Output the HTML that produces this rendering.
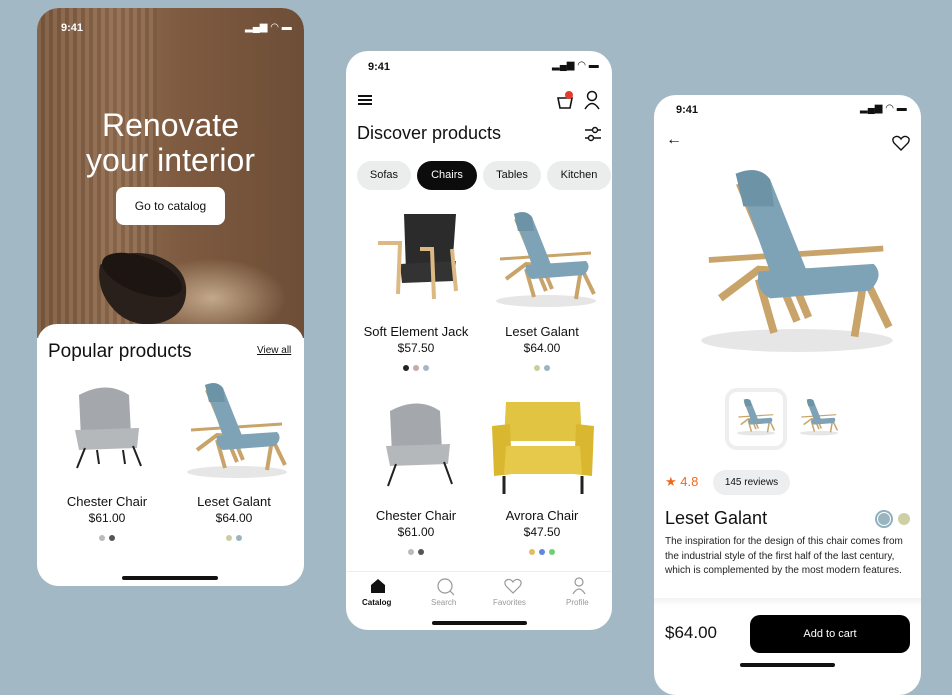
<!DOCTYPE html>
<html><head><meta charset="utf-8"><style>
*{margin:0;padding:0;box-sizing:border-box}
body{width:952px;height:674px;overflow:hidden;background:#a2b8c4;font-family:"Liberation Sans",sans-serif;position:relative;color:#111}
.ph{position:absolute;background:#fff;border-radius:22px;overflow:hidden}
.a{position:absolute}
.t{position:absolute;white-space:nowrap}
.c{text-align:center}
.dot{display:inline-block;width:6px;height:6px;border-radius:50%;margin:0 2px}
.bar{position:absolute;height:4px;background:#111;border-radius:2px}
</style></head><body>
<svg width="0" height="0" style="position:absolute">
<defs>
<g id="lounge">
 <ellipse cx="60" cy="92" rx="50" ry="6" fill="#e6e6e6"/>
 <path d="M30 10 L60 82 M36 8 L66 80" stroke="#c9a46a" stroke-width="4" fill="none"/>
 <path d="M20 70 L40 55 L95 58 L108 85 M40 60 L48 88 M95 60 L90 90" stroke="#c9a46a" stroke-width="4" fill="none"/>
 <path d="M14 50 L105 44" stroke="#c9a46a" stroke-width="3"/>
 <path d="M28 5 Q40 0 46 8 L66 58 L48 62 Z" fill="#7ea3b6"/>
 <path d="M28 5 Q40 0 46 8 L48 22 L32 22 Z" fill="#6d93a6"/>
 <path d="M40 56 L100 52 Q106 58 98 66 L46 70 Q38 66 40 56Z" fill="#7ea3b6"/>
</g>
</defs></svg>

<!-- LEFT PHONE -->
<div class="ph" style="left:37px;top:8px;width:267px;height:578px;background:#fff">
 <div class="a" style="left:0;top:0;width:267px;height:330px;background:linear-gradient(90deg,#7a573c 0%,#8f6a4c 30%,#7d5a40 55%,#6e4e37 100%)"></div>
 <div class="a" style="left:0;top:0;width:120px;height:330px;background:repeating-linear-gradient(90deg,rgba(255,255,255,.08) 0 4px,rgba(0,0,0,.06) 4px 8px)"></div>
 <div class="a" style="left:100px;top:250px;width:150px;height:80px;background:radial-gradient(ellipse at center,rgba(255,235,200,.55),rgba(255,235,200,0) 70%)"></div>
 <svg class="a" style="left:55px;top:235px" width="100" height="85"><path d="M8 22 Q30 5 62 12 Q92 22 94 44 Q96 72 68 80 Q36 86 18 62 Q4 44 8 22Z" fill="#2a201b"/><ellipse cx="50" cy="32" rx="42" ry="18" transform="rotate(20 50 32)" fill="#1c1512"/></svg>
 <div class="t" style="left:24px;top:14px;color:#fff;font-size:11px;font-weight:bold">9:41</div>
 <div class="t" style="left:208px;top:14px;color:#fff;font-size:10px">▂▄▆ ◠ ▬</div>
 <div class="t c" style="left:0;width:267px;top:100px;color:#fff;font-size:32px;line-height:35px">Renovate<br>your interior</div>
 <div class="a c" style="left:79px;top:179px;width:109px;height:38px;background:#fff;border-radius:8px;font-size:12px;line-height:38px">Go to catalog</div>
 <div class="a" style="left:0;top:316px;width:267px;height:262px;background:#fff;border-radius:20px 20px 0 0"></div>
 <div class="t" style="left:11px;top:333px;font-size:19px">Popular products</div>
 <div class="t" style="left:220px;top:337px;font-size:10px;text-decoration:underline">View all</div>
 <svg class="a" style="left:30px;top:372px" width="80" height="90"><path d="M12 15 Q40 0 62 15 L64 55 L14 58Z" fill="#a4a7ab"/><path d="M8 50 L72 48 L70 68 L12 70Z" fill="#b5b8bb"/><path d="M18 68 L10 88 M66 66 L74 86 M30 70 L32 84 M56 70 L58 84" stroke="#222" stroke-width="2"/></svg>
 <svg class="a" style="left:140px;top:372px" width="120" height="100"><use href="#lounge"/></svg>
 <div class="t c" style="left:10px;width:120px;top:486px;font-size:13px">Chester Chair</div>
 <div class="t c" style="left:10px;width:120px;top:503px;font-size:12px">$61.00</div>
 <div class="t c" style="left:10px;width:120px;top:520px"><span class="dot" style="background:#bbb"></span><span class="dot" style="background:#555"></span></div>
 <div class="t c" style="left:137px;width:120px;top:486px;font-size:13px">Leset Galant</div>
 <div class="t c" style="left:137px;width:120px;top:503px;font-size:12px">$64.00</div>
 <div class="t c" style="left:137px;width:120px;top:520px"><span class="dot" style="background:#c9ce9e"></span><span class="dot" style="background:#9bb5c0"></span></div>
 <div class="bar" style="left:85px;top:568px;width:96px"></div>
</div>

<!-- MIDDLE PHONE -->
<div class="ph" style="left:346px;top:51px;width:266px;height:579px">
 <div class="t" style="left:22px;top:10px;font-size:11px;font-weight:bold">9:41</div>
 <div class="t" style="left:206px;top:9px;font-size:10px">▂▄▆ ◠ ▬</div>
 <div class="a" style="left:12px;top:44px;width:14px;height:2px;background:#111;box-shadow:0 4px #111,0 8px #111"></div>
 <svg class="a" style="left:209px;top:40px" width="20" height="20"><path d="M3 7 L17 7 L15 17 L5 17Z" fill="none" stroke="#111" stroke-width="1.6"/><circle cx="14" cy="4" r="4" fill="#e23c2c"/></svg>
 <svg class="a" style="left:238px;top:39px" width="16" height="20"><circle cx="8" cy="6" r="4.5" fill="none" stroke="#111" stroke-width="1.5"/><path d="M1 19 Q8 8 15 19" fill="none" stroke="#111" stroke-width="1.5"/></svg>
 <div class="t" style="left:11px;top:72px;font-size:18px">Discover products</div>
 <svg class="a" style="left:238px;top:74px" width="18" height="18"><path d="M1 5H17M1 13H17" stroke="#111" stroke-width="1.4"/><circle cx="11" cy="5" r="2.5" fill="#fff" stroke="#111" stroke-width="1.4"/><circle cx="7" cy="13" r="2.5" fill="#fff" stroke="#111" stroke-width="1.4"/></svg>
 <div class="a c" style="left:11px;top:110px;width:54px;height:29px;border-radius:15px;background:#ebecec;font-size:11px;line-height:29px">Sofas</div>
 <div class="a c" style="left:71px;top:110px;width:60px;height:29px;border-radius:15px;background:#0c0c0c;color:#fff;font-size:11px;line-height:29px">Chairs</div>
 <div class="a c" style="left:137px;top:110px;width:58px;height:29px;border-radius:15px;background:#ebecec;font-size:11px;line-height:29px">Tables</div>
 <div class="a c" style="left:201px;top:110px;width:64px;height:29px;border-radius:15px;background:#ebecec;font-size:11px;line-height:29px">Kitchen</div>
 <svg class="a" style="left:26px;top:158px" width="90" height="95"><path d="M32 5 L84 5 L80 62 L34 62Z" fill="#2b2b2c"/><path d="M28 55 L84 52 L82 72 L30 74Z" fill="#333"/><path d="M6 34 L28 34 L26 85 M48 40 L60 40 L62 90 M80 40 L84 82" stroke="#dcb982" stroke-width="4" fill="none"/></svg>
 <svg class="a" style="left:140px;top:158px" width="120" height="100"><use href="#lounge"/></svg>
 <div class="t c" style="left:8px;width:124px;top:273px;font-size:13px">Soft Element Jack</div>
 <div class="t c" style="left:8px;width:124px;top:290px;font-size:12px">$57.50</div>
 <div class="t c" style="left:8px;width:124px;top:307px"><span class="dot" style="background:#222"></span><span class="dot" style="background:#c7aaa8"></span><span class="dot" style="background:#a8b5c8"></span></div>
 <div class="t c" style="left:134px;width:124px;top:273px;font-size:13px">Leset Galant</div>
 <div class="t c" style="left:134px;width:124px;top:290px;font-size:12px">$64.00</div>
 <div class="t c" style="left:134px;width:124px;top:307px"><span class="dot" style="background:#c9ce9e"></span><span class="dot" style="background:#9bb5c0"></span></div>
 <svg class="a" style="left:32px;top:345px" width="80" height="95"><path d="M12 15 Q40 0 62 15 L64 55 L14 58Z" fill="#a4a7ab"/><path d="M8 50 L72 48 L70 68 L12 70Z" fill="#b5b8bb"/><path d="M18 68 L10 90 M66 66 L74 88" stroke="#222" stroke-width="2"/></svg>
 <svg class="a" style="left:142px;top:345px" width="112" height="100"><path d="M18 6 L92 6 L94 45 L16 45Z" fill="#e2c443"/><path d="M4 30 L22 28 L24 78 L6 80Z M88 28 L106 30 L104 80 L86 78Z" fill="#d9b82f"/><path d="M18 50 L92 50 L94 78 L16 78Z" fill="#e6c84a"/><path d="M16 80 L16 98 M94 80 L94 98" stroke="#222" stroke-width="3"/></svg>
 <div class="t c" style="left:8px;width:124px;top:457px;font-size:13px">Chester Chair</div>
 <div class="t c" style="left:8px;width:124px;top:474px;font-size:12px">$61.00</div>
 <div class="t c" style="left:8px;width:124px;top:491px"><span class="dot" style="background:#bbb"></span><span class="dot" style="background:#555"></span></div>
 <div class="t c" style="left:134px;width:124px;top:457px;font-size:13px">Avrora Chair</div>
 <div class="t c" style="left:134px;width:124px;top:474px;font-size:12px">$47.50</div>
 <div class="t c" style="left:134px;width:124px;top:491px"><span class="dot" style="background:#e3bd5c"></span><span class="dot" style="background:#5e88dd"></span><span class="dot" style="background:#6fcf74"></span></div>
 <div class="a" style="left:0;top:520px;width:266px;height:1px;background:#eee"></div>
 <svg class="a" style="left:24px;top:527px" width="16" height="16"><path d="M1 7 L8 1 L15 7 L15 15 L1 15Z" fill="#111"/></svg>
 <svg class="a" style="left:91px;top:527px" width="18" height="18"><circle cx="8" cy="8" r="7" fill="none" stroke="#999" stroke-width="1.2"/><path d="M13 13 L17 17" stroke="#999" stroke-width="1.2"/></svg>
 <svg class="a" style="left:158px;top:527px" width="18" height="16"><path d="M9 15 L2 8 Q-1 3 4 1.5 Q7 1 9 4 Q11 1 14 1.5 Q19 3 16 8Z" fill="none" stroke="#999" stroke-width="1.2"/></svg>
 <svg class="a" style="left:226px;top:526px" width="14" height="18"><circle cx="7" cy="5" r="4" fill="none" stroke="#999" stroke-width="1.2"/><path d="M1 17 Q7 7 13 17" fill="none" stroke="#999" stroke-width="1.2"/></svg>
 <div class="t" style="left:16px;top:547px;font-size:8px;font-weight:bold">Catalog</div>
 <div class="t" style="left:85px;top:547px;font-size:8px;color:#999">Search</div>
 <div class="t" style="left:147px;top:547px;font-size:8px;color:#999">Favorites</div>
 <div class="t" style="left:220px;top:547px;font-size:8px;color:#999">Profile</div>
 <div class="bar" style="left:86px;top:570px;width:95px"></div>
</div>

<!-- RIGHT PHONE -->
<div class="ph" style="left:654px;top:95px;width:267px;height:600px">
 <div class="t" style="left:22px;top:9px;font-size:11px;font-weight:bold">9:41</div>
 <div class="t" style="left:206px;top:8px;font-size:10px">▂▄▆ ◠ ▬</div>
 <div class="t" style="left:12px;top:36px;font-size:16px">←</div>
 <svg class="a" style="left:238px;top:40px" width="18" height="16"><path d="M9 15 L2 8 Q-1 3 4 1.5 Q7 1 9 4 Q11 1 14 1.5 Q19 3 16 8Z" fill="none" stroke="#111" stroke-width="1.4"/></svg>
 <svg class="a" style="left:28px;top:65px" width="230" height="200" viewBox="0 0 120 100"><use href="#lounge"/></svg>
 <div class="a" style="left:71px;top:293px;width:62px;height:62px;border:4px solid #eceeef;border-radius:12px"></div>
 <svg class="a" style="left:79px;top:302px" width="46" height="40" viewBox="0 0 120 100"><use href="#lounge"/></svg>
 <svg class="a" style="left:142px;top:302px" width="46" height="40" viewBox="0 0 120 100"><use href="#lounge"/></svg>
 <div class="t" style="left:11px;top:379px;font-size:13px;color:#ef6a1e">★ 4.8</div>
 <div class="a c" style="left:59px;top:375px;width:77px;height:25px;border-radius:13px;background:#eceeef;font-size:10px;line-height:25px">145 reviews</div>
 <div class="t" style="left:11px;top:413px;font-size:18px">Leset Galant</div>
 <div class="a" style="left:221px;top:415px;width:18px;height:18px;border-radius:50%;border:2px solid #8fb0bf;background:#fff"></div>
 <div class="a" style="left:224px;top:418px;width:12px;height:12px;border-radius:50%;background:#9bb5c0"></div>
 <div class="a" style="left:244px;top:418px;width:12px;height:12px;border-radius:50%;background:#cdd0a4"></div>
 <div class="a" style="left:11px;top:440px;width:250px;font-size:10px;line-height:14.5px;color:#222">The inspiration for the design of this chair comes from the industrial style of the first half of the last century, which is complemented by the most modern features.</div>
 <div class="a" style="left:0;top:503px;width:267px;height:8px;background:linear-gradient(#f2f2f2,#fff)"></div>
 <div class="t" style="left:11px;top:528px;font-size:17px">$64.00</div>
 <div class="a c" style="left:96px;top:520px;width:160px;height:38px;background:#000;color:#fff;border-radius:10px;font-size:11px;line-height:38px">Add to cart</div>
 <div class="bar" style="left:86px;top:568px;width:95px"></div>
</div>
</body></html>
